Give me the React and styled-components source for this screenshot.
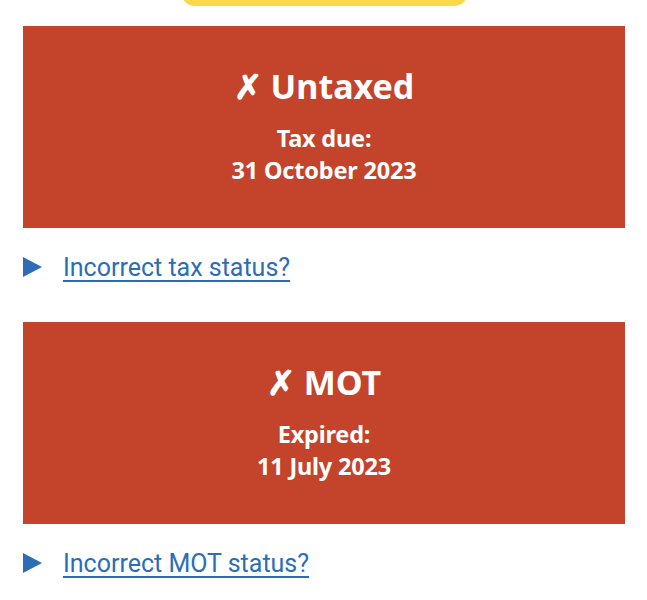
import React from "react";
import styled, { createGlobalStyle } from "styled-components";

const Global = createGlobalStyle`
  body {
    margin: 0;
    background: #ffffff;
    font-family: "Noto Sans", "Liberation Sans", sans-serif;
  }
`;

const Page = styled.main`
  padding: 0 22px 0 23px;
  overflow: hidden;
`;

const TopButton = styled.div`
  width: 287px;
  height: 40px;
  margin: -34px auto 20px;
  background: #fcd84b;
  border-radius: 14px;
`;

const Panel = styled.section`
  background: #c4442b;
  color: #ffffff;
  text-align: center;
  padding: 40px 20px 42px;
`;

const Title = styled.h2`
  margin: 0 0 15px;
  font-size: 34px;
  line-height: 41px;
  font-weight: 700;
`;

const Detail = styled.p`
  margin: 0;
  font-size: 23.5px;
  line-height: 32px;
  font-weight: 700;
  letter-spacing: -0.2px;
`;

const Disclosure = styled.div`
  display: flex;
  align-items: center;
  gap: 21px;
  height: 38px;
  margin: 20px 0 36px;
`;

const Arrow = styled.span`
  width: 0;
  height: 0;
  border-top: 10px solid transparent;
  border-bottom: 10px solid transparent;
  border-left: 19px solid #2c6db5;
`;

const Link = styled.a`
  font-family: Roboto, "Liberation Sans", sans-serif;
  font-size: 25px;
  color: #2c6db5;
  text-decoration: underline;
  text-underline-offset: 4px;
  text-decoration-thickness: 2px;
`;

const statuses = [
  { title: "Untaxed", label: "Tax due:", date: "31 October 2023", link: "Incorrect tax status?" },
  { title: "MOT", label: "Expired:", date: "11 July 2023", link: "Incorrect MOT status?" },
];

export default function App() {
  return (
    <>
      <Global />
      <Page>
        <TopButton />
        {statuses.map((s) => (
          <React.Fragment key={s.title}>
            <Panel>
              <Title>✗ {s.title}</Title>
              <Detail>{s.label}</Detail>
              <Detail>{s.date}</Detail>
            </Panel>
            <Disclosure>
              <Arrow />
              <Link href="#">{s.link}</Link>
            </Disclosure>
          </React.Fragment>
        ))}
      </Page>
    </>
  );
}
